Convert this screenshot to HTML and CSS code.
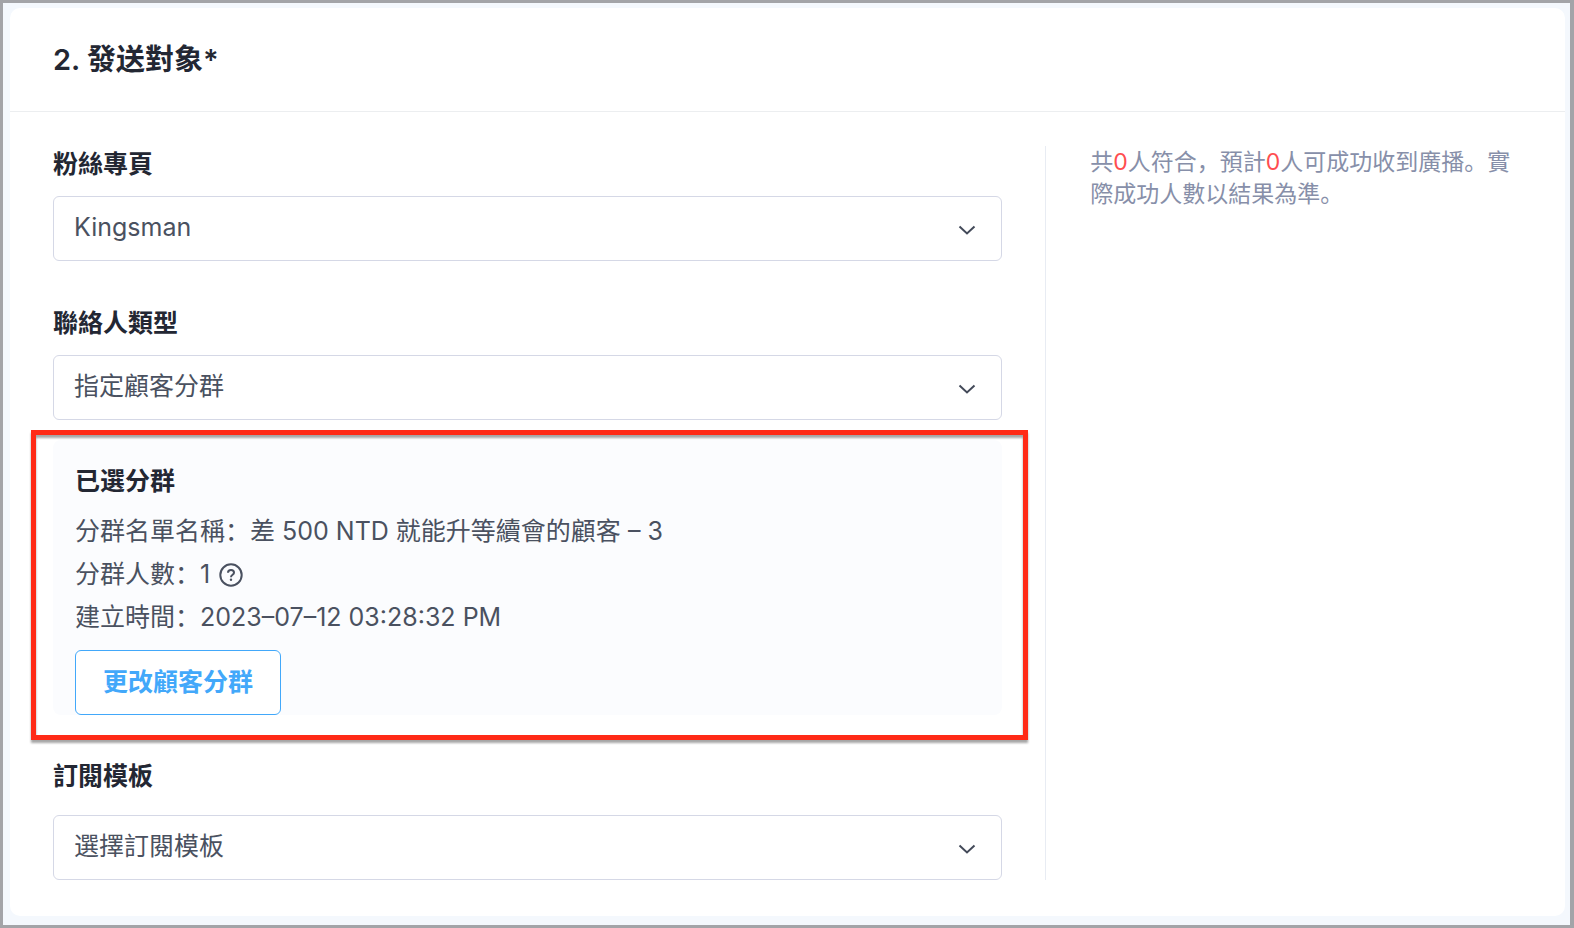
FILE: index.html
```
<!DOCTYPE html>
<html lang="zh">
<head>
    <meta charset="UTF-8">
    <meta name="viewport" content="width=device-width, initial-scale=1.0">
    <title>發送對象</title>
    <link rel="stylesheet" href="styles.css">
</head>
<body>

    <section class="card">
        <header class="card-header">
            <h2>2. 發送對象*</h2>
        </header>

        <div class="card-body">
            <form class="main">
                <!-- Fan page -->
                <div class="field">
                    <label for="page">粉絲專頁</label>
                    <div class="select">
                        <select id="page">
                            <option>Kingsman</option>
                        </select>
                        <svg class="chevron" viewBox="0 0 18 10"><path d="M1.5 1.5 L9 8.5 L16.5 1.5"/></svg>
                    </div>
                </div>

                <!-- Contact type -->
                <div class="field">
                    <label for="type">聯絡人類型</label>
                    <div class="select">
                        <select id="type">
                            <option>指定顧客分群</option>
                        </select>
                        <svg class="chevron" viewBox="0 0 18 10"><path d="M1.5 1.5 L9 8.5 L16.5 1.5"/></svg>
                    </div>
                </div>

                <!-- Selected segment -->
                <div class="segment">
                    <h3>已選分群</h3>
                    <p>分群名單名稱：差 500 NTD 就能升等續會的顧客 – 3</p>
                    <p>分群人數：1
                        <svg class="help" viewBox="0 0 24 24">
                            <circle cx="12" cy="12" r="10.7"/>
                            <path d="M9 9.8 C9 6.2 15 6.2 15 9.8 C15 11.8 12 11.8 12 14.2"/>
                            <circle class="dot" cx="12" cy="16.8" r="1.2"/>
                        </svg>
                    </p>
                    <p>建立時間：2023–07–12 03:28:32 PM</p>
                    <button type="button">更改顧客分群</button>
                </div>

                <!-- Subscription template -->
                <div class="field template">
                    <label for="template">訂閱模板</label>
                    <div class="select">
                        <select id="template">
                            <option>選擇訂閱模板</option>
                        </select>
                        <svg class="chevron" viewBox="0 0 18 10"><path d="M1.5 1.5 L9 8.5 L16.5 1.5"/></svg>
                    </div>
                </div>
            </form>

            <aside class="summary">
                共<span class="count">0</span>人符合，預計<span class="count">0</span>人可成功收到廣播。實際成功人數以結果為準。
            </aside>
        </div>
    </section>

</body>
</html>
```

FILE: styles.css
```
* { box-sizing: border-box; }

body {
    margin: 0;
    min-height: 100vh;
    display: flex;
    padding: 5px 5px 9px 7px;
    border: 3px solid #a3a4a8;
    border-right-width: 4px;
    background: #f4f8fd;
    color: #4a5160;
    font-family: Inter, "Noto Sans CJK SC", sans-serif;
    font-size: 25px;
    line-height: 43px;
}

h2, h3, p { margin: 0; }

.card { flex: 1; background: #fff; border-radius: 10px; }

.card-header { padding: 30px 43px; border-bottom: 1px solid #eceef0; }
.card-header h2 { color: #232733; font-size: 29px; font-weight: 600; line-height: 43px; }

.card-body {
    display: grid;
    grid-template-columns: 2fr 1fr;
    gap: 43px;
    padding: 34px 45px 36px 43px;
}

.field label, .segment h3 { color: #232733; font-size: 25px; font-weight: 600; }
.field label { display: block; line-height: 36px; margin-bottom: 14px; }
.field + .field { margin-top: 44px; }
.template label { margin-bottom: 21px; }

.select { position: relative; }
.select select {
    display: block;
    width: 100%;
    height: 65px;
    padding: 0 60px 2px 20px;
    border: 1px solid #d5d8e6;
    border-radius: 6px;
    background: #fff;
    color: #4a5160;
    font: inherit;
    appearance: none;
}
.chevron {
    position: absolute;
    top: 29px;
    right: 26px;
    width: 18px;
    height: 10px;
    fill: none;
    stroke: #434a59;
    stroke-width: 2;
    pointer-events: none;
}

.segment {
    position: relative;
    margin: 20px 0 43px;
    padding: 20px 22px 0;
    border-radius: 8px;
    background: #fbfcfe;
}
.segment h3 { margin-bottom: 7px; }
.segment button {
    display: block;
    height: 65px;
    margin-top: 11px;
    padding: 0 27px;
    border: 1px solid #42a8fa;
    border-radius: 6px;
    background: #fff;
    color: #42a8fa;
    font: inherit;
    font-weight: 600;
}

/* Red outline around the selected segment */
.segment::after {
    content: "";
    position: absolute;
    inset: -10px -26px -25px -22px;
    border: 5px solid #ff2a16;
    filter: drop-shadow(0 3px 1px rgba(0, 0, 0, 0.35));
    pointer-events: none;
}

.help {
    width: 24px;
    height: 24px;
    margin-left: 2px;
    vertical-align: -4px;
    fill: none;
    stroke: #4a5160;
    stroke-width: 2;
}
.help .dot { fill: #4a5160; stroke: none; }

.summary {
    padding-left: 44px;
    border-left: 1px solid #e8ecf3;
    color: #878fa9;
    font-size: 23px;
    line-height: 32px;
}
.count { color: #ff4d4f; }
```
